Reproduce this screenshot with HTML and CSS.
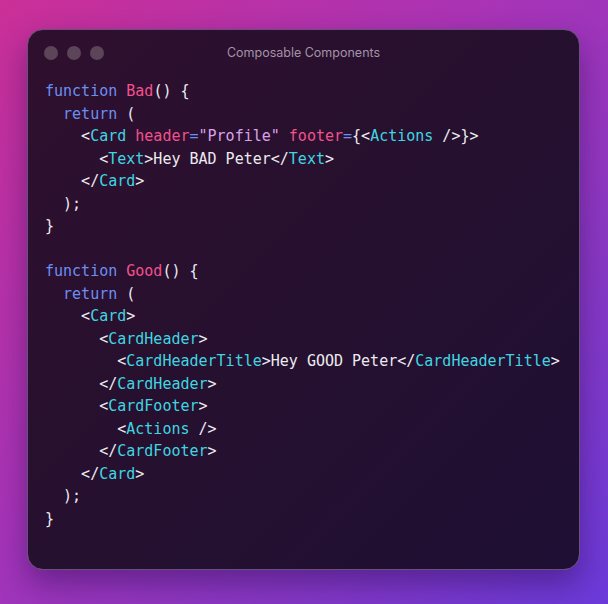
FILE: index.html
```html
<!DOCTYPE html>
<html>
<head>
<meta charset="utf-8">
<link rel="stylesheet" href="styles.css">
</head>
<body>
<div class="stage">
  <div class="window">
    <div class="titlebar">
      <div class="dots"><span class="dot"></span><span class="dot"></span><span class="dot"></span></div>
      <div class="title">Composable Components</div>
    </div>
<pre class="code"><span class="kw">function</span> <span class="fn">Bad</span>() {
  <span class="kw">return</span> (
    &lt;<span class="tag">Card</span> <span class="attr">header</span><span class="eq">=</span><span class="str">"Profile"</span> <span class="attr">footer</span><span class="eq">=</span>{&lt;<span class="tag">Actions</span> /&gt;}&gt;
      &lt;<span class="tag">Text</span>&gt;Hey BAD Peter&lt;/<span class="tag">Text</span>&gt;
    &lt;/<span class="tag">Card</span>&gt;
  );
}

<span class="kw">function</span> <span class="fn">Good</span>() {
  <span class="kw">return</span> (
    &lt;<span class="tag">Card</span>&gt;
      &lt;<span class="tag">CardHeader</span>&gt;
        &lt;<span class="tag">CardHeaderTitle</span>&gt;Hey GOOD Peter&lt;/<span class="tag">CardHeaderTitle</span>&gt;
      &lt;/<span class="tag">CardHeader</span>&gt;
      &lt;<span class="tag">CardFooter</span>&gt;
        &lt;<span class="tag">Actions</span> /&gt;
      &lt;/<span class="tag">CardFooter</span>&gt;
    &lt;/<span class="tag">Card</span>&gt;
  );
}</pre>
  </div>
</div>
</body>
</html>
```
FILE: styles.css
```css
html, body {
  margin: 0;
  padding: 0;
}
body {
  width: 608px;
  height: 604px;
  overflow: hidden;
  background: linear-gradient(135deg, #cb2f97 0%, #a534b8 45%, #8a38c4 70%, #6a3ad9 100%);
}
.stage {
  padding: 29px 28px 0 27px;
}
.window {
  box-sizing: border-box;
  width: 553px;
  height: 541px;
  border-radius: 16px;
  border: 1px solid #66527a;
  background: linear-gradient(135deg, #2f0f2e 0%, #26102f 50%, #1e0f34 100%);
  box-shadow: 0 14px 30px rgba(40, 10, 80, 0.45);
  overflow: hidden;
}
.titlebar {
  position: relative;
  height: 45px;
  display: flex;
  align-items: center;
  padding-left: 16px;
}
.dots {
  display: flex;
  gap: 9px;
}
.dot {
  width: 14px;
  height: 14px;
  border-radius: 50%;
  background: #5c4459;
}
.title {
  position: absolute;
  left: 0;
  right: 0;
  top: 0;
  height: 45px;
  line-height: 45px;
  text-align: center;
  font-family: Inter, "Noto Sans", sans-serif;
  font-size: 12.5px;
  color: #a393a6;
}
.code {
  margin: 0;
  padding: 5px 0 0 17px;
  font-family: "DejaVu Sans Mono", "Liberation Mono", monospace;
  font-size: 15px;
  line-height: 22.5px;
  color: #ecebef;
}
.kw { color: #6c8ff2; }
.fn { color: #f2528c; }
.tag { color: #3fd6e1; }
.attr { color: #f2528c; }
.eq { color: #6c8ff2; }
.str { color: #d9a3ea; }
```
